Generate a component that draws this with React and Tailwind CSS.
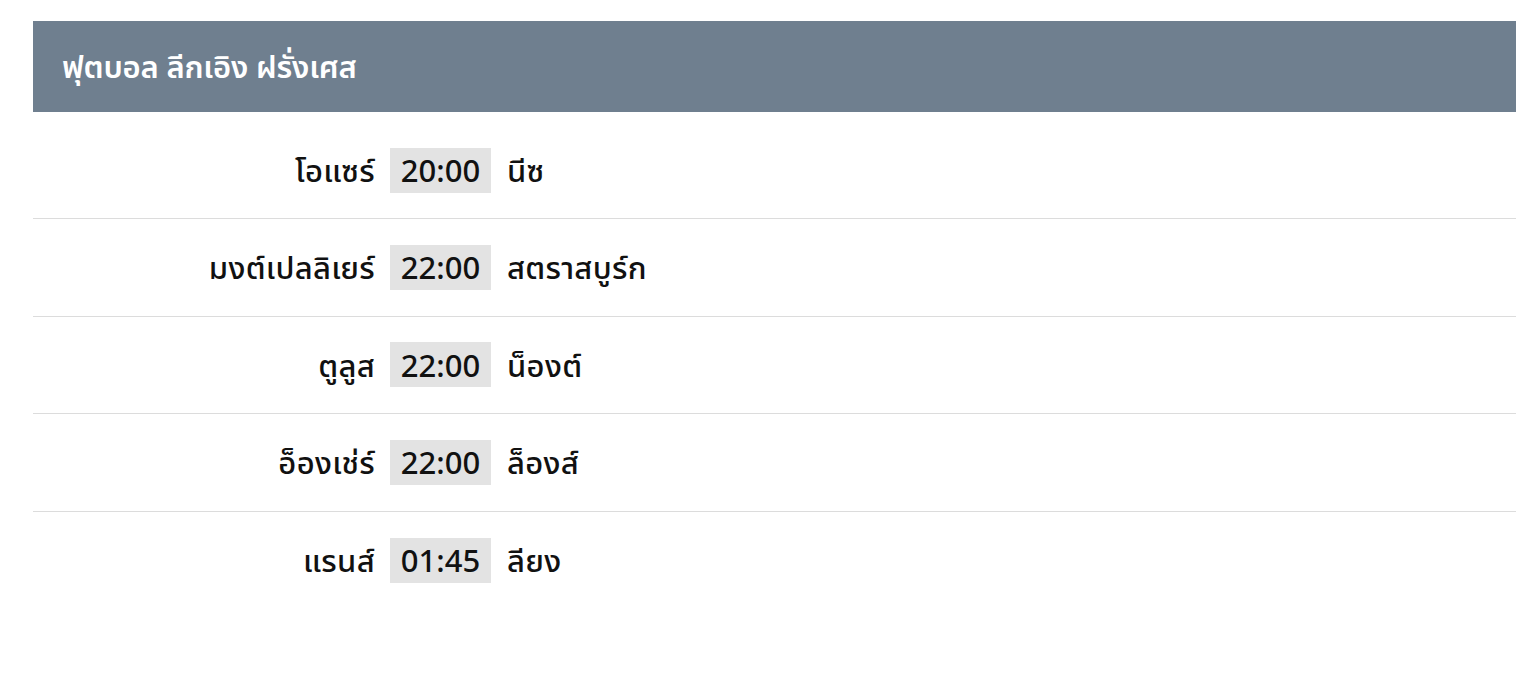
const matches = [
    { home: 'โอแซร์', time: '20:00', away: 'นีซ' },
    { home: 'มงต์เปลลิเยร์', time: '22:00', away: 'สตราสบูร์ก' },
    { home: 'ตูลูส', time: '22:00', away: 'น็องต์' },
    { home: 'อ็องเช่ร์', time: '22:00', away: 'ล็องส์' },
    { home: 'แรนส์', time: '01:45', away: 'ลียง' },
];

const App = () => {
    return (
        <div className="min-h-[690px] bg-white pt-[21px] pl-[33px] pr-[20px] text-[#111]" style={{ fontFamily: '"Noto Sans", "Noto Sans Thai", Tahoma, sans-serif' }}>
            {/* Header */}
            <div className="h-[91px] bg-[#6f7f8f] flex items-center px-[29px]">
                <h2 className="text-white text-[31px] font-semibold tracking-[-0.2px]">ฟุตบอล ลีกเอิง ฝรั่งเศส</h2>
            </div>

            {/* Match list */}
            <div className="pt-[10px]">
                {matches.map((m, i) => (
                    <div
                        key={i}
                        className={`h-[97.4px] flex items-center text-[31px] font-medium ${i < matches.length - 1 ? 'border-b border-[#dcdcdc]' : ''}`}
                    >
                        <div className="w-[342px] text-right tracking-[0.3px]">{m.home}</div>
                        <div className="ml-[15px] w-[101px] h-[45px] bg-[#e3e3e3] flex items-center justify-center">{m.time}</div>
                        <div className="ml-[16px] tracking-[0.3px]">{m.away}</div>
                    </div>
                ))}
            </div>
        </div>
    );
};

export default App;
